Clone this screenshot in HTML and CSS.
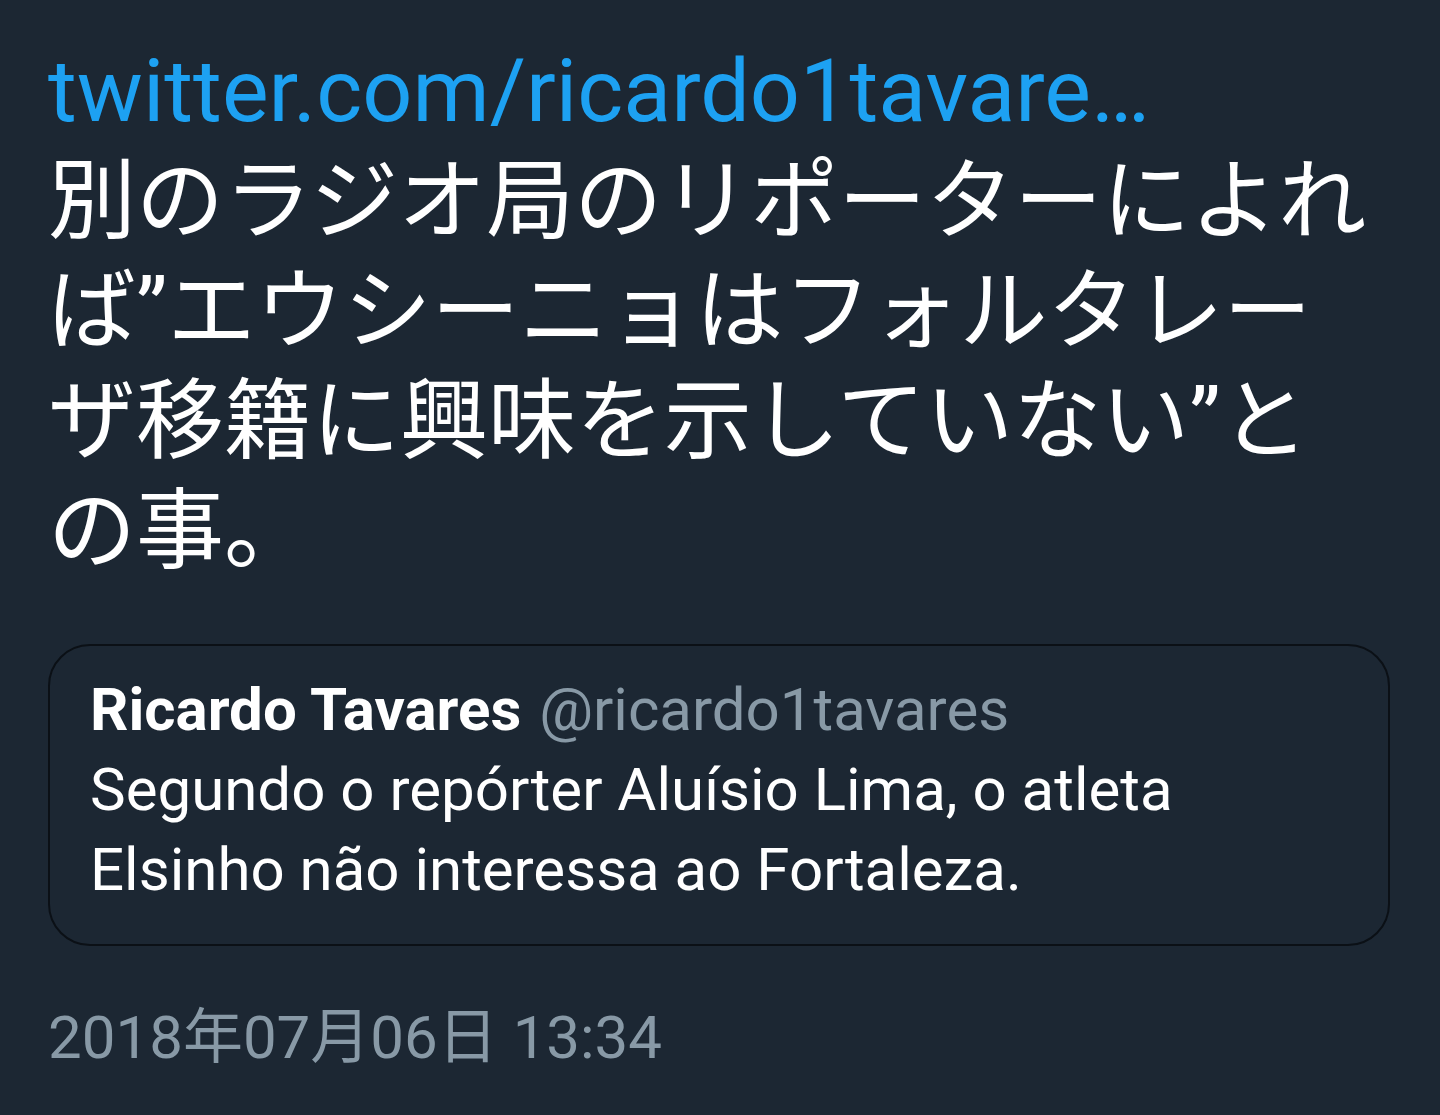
FILE: index.html
```html
<!DOCTYPE html>
<html lang="ja">
<head>
    <meta charset="UTF-8">
    <meta name="viewport" content="width=device-width, initial-scale=1.0">
    <title>Tweet</title>
    <link rel="stylesheet" href="styles.css">
</head>
<body>

    <div class="tweet">
        <div class="tweet-text">
            <a class="link" href="#">twitter.com/ricardo1tavare…</a>
            別のラジオ局のリポーターによれば”エウシーニョはフォルタレーザ移籍に興味を示していない”との事。
        </div>

        <div class="quote">
            <div class="quote-head">
                <span class="name">Ricardo Tavares</span>
                <span class="handle">@ricardo1tavares</span>
            </div>
            <div class="quote-text">Segundo o repórter Aluísio Lima, o atleta Elsinho não interessa ao Fortaleza.</div>
        </div>

        <div class="date">2018年07月06日 13:34</div>
    </div>

</body>
</html>
```

FILE: styles.css
```css
body {
    margin: 0;
    background-color: #1c2733;
    font-family: Roboto, "Noto Sans CJK JP", sans-serif;
    color: #ffffff;
}
.tweet {
    padding: 36px 50px 0 48px;
    height: 1079px;
}
.tweet-text {
    font-size: 88px;
    line-height: 110px;
}
.link {
    display: block;
    color: #1da1f2;
    text-decoration: none;
}
/* Цитируемый твит */
.quote {
    margin-top: 58px;
    border: 2px solid #0b1016;
    border-radius: 42px;
    padding: 24px 42px 34px 40px;
}
.quote-head {
    font-size: 60px;
    line-height: 80px;
}
.name {
    font-weight: bold;
}
.handle {
    color: #8899a6;
    margin-left: 3px;
}
.quote-text {
    font-size: 60px;
    line-height: 80px;
}
.date {
    margin-top: 42px;
    font-size: 60px;
    color: #8899a6;
}
```
